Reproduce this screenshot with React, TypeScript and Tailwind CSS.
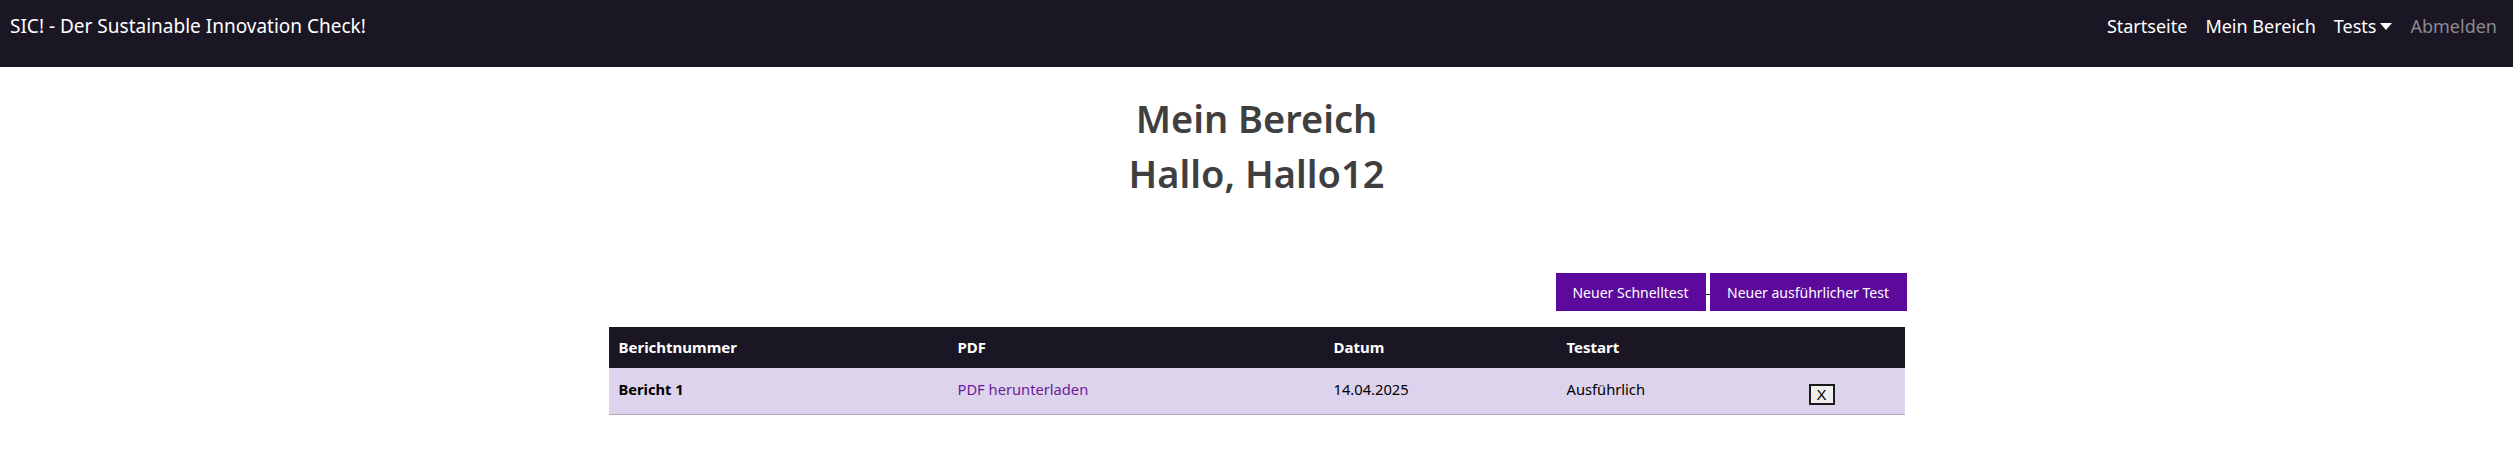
import React from "react";

export default function App() {
  const font = { fontFamily: '"Noto Sans", "Open Sans", sans-serif' };
  return (
    <div className="min-h-[452px] bg-white" style={font}>
      <nav className="h-[67px] bg-[#1a1624] flex items-start justify-between pl-[10px] pr-[16px]">
        <div className="text-[19px] leading-[30px] text-white pt-[11px]">SIC! - Der Sustainable Innovation Check!</div>
        <ul className="flex items-center pt-[14px] text-[18px] leading-[24px]">
          <li className="px-[9px] text-white">Startseite</li>
          <li className="px-[9px] text-white">Mein Bereich</li>
          <li className="px-[9px] text-white flex items-center gap-[4px]">
            Tests
            <svg width="12" height="7" viewBox="0 0 12 7" className="mt-[1px]">
              <path d="M0 0 L12 0 L6 7 Z" fill="white" />
            </svg>
          </li>
          <li className="pl-[9px] text-[#8c8a92]">Abmelden</li>
        </ul>
      </nav>
      <main className="w-[1296px] mx-auto">
        <div className="flex flex-col items-center pt-[27px] text-[#3f3f3f] font-semibold">
          <h1 className="text-[38px] leading-[48px]">Mein Bereich</h1>
          <h1 className="text-[38px] leading-[48px] mt-[7px]">Hallo, Hallo12</h1>
        </div>
        <div className="flex justify-end items-end mt-[76px] mr-[-2px]">
          <button className="h-[38px] px-[14px] bg-[#5c0a9c] text-white text-[14px] w-[150px]">Neuer Schnelltest</button>
          <span className="w-[4px] h-[1px] bg-[#222] mb-[16px]"></span>
          <button className="h-[38px] px-[14px] bg-[#5c0a9c] text-white text-[14px] w-[197px]">Neuer ausführlicher Test</button>
        </div>
        <table className="mt-[16px] w-full table-fixed border-collapse">
          <colgroup>
            <col className="w-[339px]" />
            <col className="w-[376px]" />
            <col className="w-[233px]" />
            <col className="w-[242px]" />
            <col />
          </colgroup>
          <thead>
            <tr className="bg-[#1a1624] text-white h-[41px] text-[15px]">
              <th className="text-left font-bold pl-[10px]">Berichtnummer</th>
              <th className="text-left font-bold pl-[10px]">PDF</th>
              <th className="text-left font-bold pl-[10px]">Datum</th>
              <th className="text-left font-bold pl-[10px]">Testart</th>
              <th className="text-left pl-[10px]"></th>
            </tr>
          </thead>
          <tbody>
            <tr className="bg-[#ddd3ec] h-[46px] border-b border-[#b3aabf] text-black text-[14.7px]">
              <td className="pl-[10px] pb-[4px] font-bold">Bericht 1</td>
              <td className="pl-[10px] pb-[4px] text-[#6a1b9a]">PDF herunterladen</td>
              <td className="pl-[10px] pb-[4px]">14.04.2025</td>
              <td className="pl-[10px] pb-[4px]">Ausführlich</td>
              <td className="pl-[10px]">
                <button
                  className="w-[26px] h-[21px] border-2 border-[#1a1a1a] bg-[#efefef] text-[15px] leading-[16px] flex items-center justify-center mt-[8px]"
                  style={{ fontFamily: '"Liberation Sans", Arial, sans-serif' }}
                >
                  X
                </button>
              </td>
            </tr>
          </tbody>
        </table>
      </main>
    </div>
  );
}
